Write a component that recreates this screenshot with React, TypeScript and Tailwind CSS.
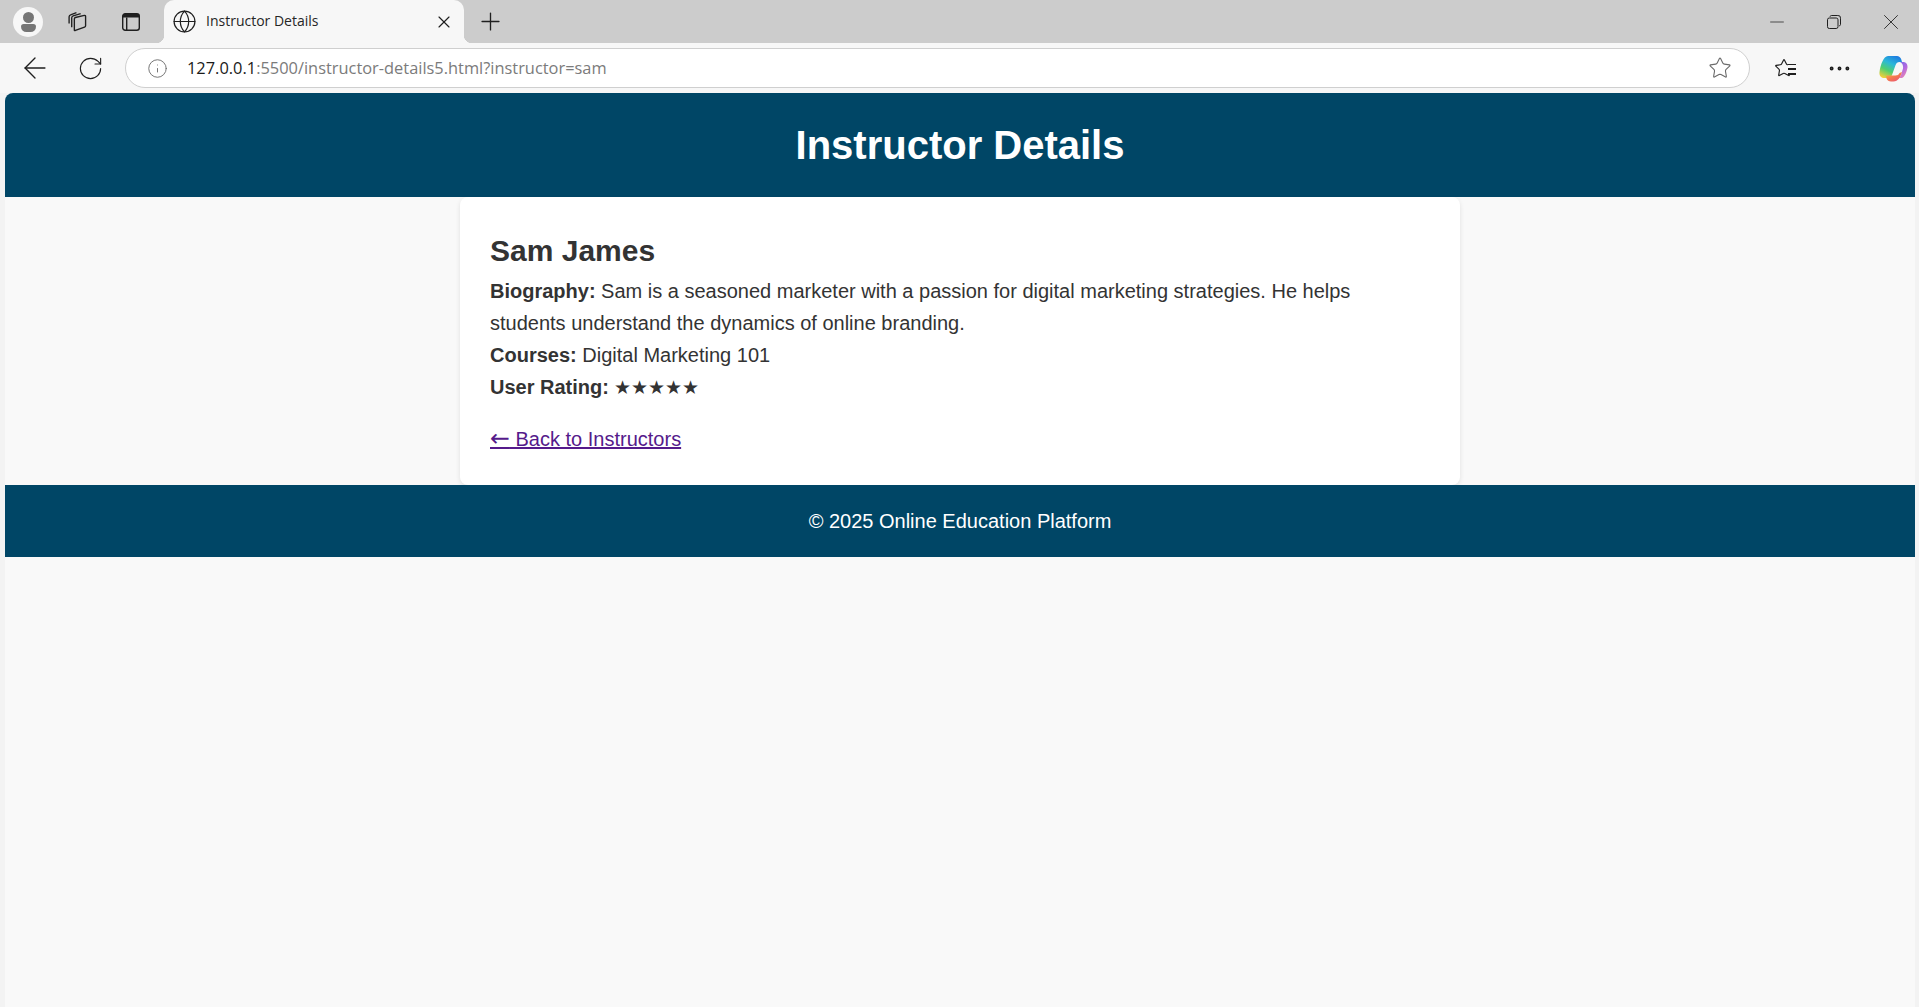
import React from "react";
import { ArrowLeft, Info, MoreHorizontal, Plus, RotateCw, Star, X, Minus, Globe } from "lucide-react";

function Copilot() {
  return (
    <svg width="29" height="27" viewBox="0 0 29 27">
      <defs>
        <linearGradient id="cpa" x1="0.7" y1="0" x2="0.2" y2="1">
          <stop offset="0" stopColor="#1f7fe0" />
          <stop offset="0.35" stopColor="#2bb8d8" />
          <stop offset="0.65" stopColor="#4fcf70" />
          <stop offset="1" stopColor="#f4d03a" />
        </linearGradient>
        <linearGradient id="cpb" x1="0.2" y1="0" x2="0.8" y2="1">
          <stop offset="0" stopColor="#7a6be8" />
          <stop offset="0.5" stopColor="#b26ae0" />
          <stop offset="1" stopColor="#f08ab0" />
        </linearGradient>
        <linearGradient id="cpc" x1="0.1" y1="0" x2="0.9" y2="1">
          <stop offset="0" stopColor="#f7c23c" />
          <stop offset="0.5" stopColor="#f47a4e" />
          <stop offset="1" stopColor="#ea4f7a" />
        </linearGradient>
      </defs>
      <path d="M9 1h9c2 0 3.500 1.200 4.300 3.500L23 7h-2.500c-2 0-3.200 1-3.900 3L13 20c-.8 2-2.200 3-4.500 3H5c-3 0-5-2.500-4.500-6C1.500 10 4.500 1 9 1z" fill="url(#cpa)" />
      <path d="M20.500 7H24c3 0 4.800 2.200 4.500 5.500-.8 5-3 9.500-5.500 10.500H18c2 0 3.200-1 4-3l2-6.500c.6-2.500-1-6.500-3.500-6.500z" fill="url(#cpb)" />
      <path d="M7 20.500h9.500c2 0 3.400-.8 4-2.500l2.500-1c-1.500 5-4 9.500-8.500 9.500H12c-2 0-3.800-1-4.500-3L7 20.500z" fill="url(#cpc)" />
    </svg>
  );
}

export default function App() {
  return (
    <div className="h-[1007px] w-full flex flex-col overflow-hidden bg-[#f3f3f3] font-['Liberation_Sans',Arial,sans-serif]">
      {/* tab strip */}
      <div className="h-[43px] shrink-0 bg-[#cccccc] flex items-center text-[#1f1f1f]">
        <div className="w-[164px] flex items-center pl-[13px] shrink-0">
          <div className="w-[30px] h-[30px] rounded-full bg-[#f7f7f7] flex flex-col items-center justify-center">
            <div className="w-[11px] h-[11px] rounded-full bg-[#767676]" />
            <div className="w-[15px] h-[8px] rounded-b-[6px] rounded-t-[3px] bg-[#767676] mt-[1px]" />
          </div>
          <svg className="ml-[24px]" width="21" height="21" viewBox="0 0 20 20" fill="none" stroke="#1f1f1f" strokeWidth="1.300">
            <path d="M7 18.300 V7.500 a1.500 1.500 0 0 1 1-1.300 l8.500-2 a1 1 0 0 1 1.200 1 V14 a1.500 1.500 0 0 1-1 1.400 L8 18.500 a.8 .8 0 0 1-1-.2z" />
            <path d="M4.500 15.500 V6.500 a2 2 0 0 1 1.400-1.800 L13 2.500" />
            <path d="M2 12 V5.500 a2 2 0 0 1 1.400-1.800 L9 1.500" />
          </svg>
          <svg className="ml-[34px]" width="18" height="18" viewBox="0 0 18 18" fill="none">
            <rect x="0.700" y="0.700" width="16.600" height="16.600" rx="2.500" stroke="#1f1f1f" strokeWidth="1.400" />
            <path d="M0.700 3.200 a2.500 2.500 0 0 1 2.500-2.500 h11.600 a2.500 2.500 0 0 1 2.500 2.500 V4.500 H0.700z" fill="#1f1f1f" />
            <path d="M4.700 4.500 V17" stroke="#1f1f1f" strokeWidth="1.400" />
          </svg>
        </div>
        <div className="relative h-[43px] w-[300px] shrink-0 bg-[#f7f7f7] rounded-t-[10px] flex items-center pl-[8px]">
          <div className="absolute left-[-8px] bottom-0 w-[8px] h-[8px] bg-[radial-gradient(circle_at_0_0,transparent_8px,#f7f7f7_8.500px)]" />
          <div className="absolute right-[-8px] bottom-0 w-[8px] h-[8px] bg-[radial-gradient(circle_at_100%_0,transparent_8px,#f7f7f7_8.500px)]" />
          <Globe size={25} strokeWidth={1.150} color="#1f1f1f" className="shrink-0" />
          <span className="ml-[9px] mb-[2px] text-[14px] font-['Open_Sans','Liberation_Sans',sans-serif] text-[#262626] leading-none">Instructor Details</span>
          <X size={20} strokeWidth={1.400} color="#1f1f1f" className="ml-auto mr-[10px]" />
        </div>
        <Plus size={29} strokeWidth={1.100} color="#1f1f1f" className="ml-[12px]" />
        <div className="ml-auto flex items-center">
          <div className="w-[57px] flex justify-center"><Minus size={22} strokeWidth={0.800} color="#1f1f1f" /></div>
          <div className="w-[57px] flex justify-center">
            <svg width="14" height="14" viewBox="0 0 14 14" fill="none" stroke="#1f1f1f" strokeWidth="1">
              <rect x="0.500" y="3" width="10.500" height="10.500" rx="1.800" />
              <path d="M3 1.700 a1.500 1.500 0 0 1 1.300-1.200 h6.500 a2.500 2.500 0 0 1 2.700 2.700 v6.300 a1.500 1.500 0 0 1-1.300 1.400" />
            </svg>
          </div>
          <div className="w-[57px] flex justify-center"><X size={26} strokeWidth={0.800} color="#1f1f1f" /></div>
        </div>
      </div>
      {/* toolbar */}
      <div className="h-[50px] shrink-0 bg-[#f7f7f7] flex items-center">
        <ArrowLeft size={34} strokeWidth={0.950} color="#1f1f1f" className="ml-[18px] shrink-0" />
        <RotateCw size={27} strokeWidth={1} color="#1f1f1f" className="ml-[25px] shrink-0" />
        <div className="ml-[21px] w-[1625px] h-[40px] shrink-0 bg-white rounded-full border border-[#cfcfcf] flex items-center pl-[21px] pr-[17px]">
          <Info size={21} strokeWidth={1.050} color="#6b6b6b" className="shrink-0" />
          <span className="ml-[19px] mt-[1px] text-[16.400px] font-['Open_Sans','Liberation_Sans',sans-serif] leading-none whitespace-nowrap text-[#7b7b7b]"><span className="text-[#1a1a1a]">127.0.0.1</span>:5500/instructor-details5.html?instructor=sam</span>
          <Star size={24} strokeWidth={1.100} color="#6b6b6b" className="ml-auto shrink-0" />
        </div>
        <div className="ml-[25px] relative shrink-0 w-[21px] h-[21px]">
          <Star size={20} strokeWidth={1.400} color="#1f1f1f" className="absolute left-[-1px] top-0" />
          <div className="absolute right-0 top-[6px] w-[8px] h-[11px] flex flex-col justify-between bg-[#f7f7f7]">
            <div className="h-[1.500px] bg-[#1f1f1f]" /><div className="h-[1.500px] bg-[#1f1f1f]" /><div className="h-[1.500px] bg-[#1f1f1f]" />
          </div>
        </div>
        <MoreHorizontal size={27} strokeWidth={1.500} color="#1f1f1f" className="ml-[30px] shrink-0" />
        <div className="ml-[26px] shrink-0"><Copilot /></div>
      </div>
      {/* page */}
      <div className="flex-1 min-h-0 ml-[5px] mr-[4px] bg-[#f9f9f9] rounded-t-[8px] overflow-hidden flex flex-col text-[#333333]">
        <header className="h-[104px] shrink-0 bg-[#004666] flex items-center justify-center">
          <h1 className="text-[40px] font-bold text-white leading-none">Instructor Details</h1>
        </header>
        <main className="w-[1000px] h-[288px] shrink-0 mx-auto bg-white rounded-[8px] shadow-[0_2px_5px_rgba(0,0,0,0.1)] p-[30px] text-[20px] leading-[32px]">
          <h2 className="text-[30px] font-bold leading-[48px]">Sam James</h2>
          <p><strong>Biography:</strong> Sam is a seasoned marketer with a passion for digital marketing strategies. He helps students understand the dynamics of online branding.</p>
          <p className="h-[32px]"><strong>Courses:</strong> Digital Marketing 101</p>
          <p className="h-[32px]"><strong>User Rating:</strong> <span className="text-[18.900px] leading-none">★★★★★</span></p>
          <a href="#" className="block w-fit h-[32px] mt-[20px] text-[#551a8b] underline"><span className="font-['DejaVu_Sans',sans-serif] text-[23.800px] leading-none">←</span> Back to Instructors</a>
        </main>
        <footer className="h-[72px] shrink-0 bg-[#004666] text-white text-[20px] flex items-center justify-center">© 2025 Online Education Platform</footer>
      </div>
    </div>
  );
}
